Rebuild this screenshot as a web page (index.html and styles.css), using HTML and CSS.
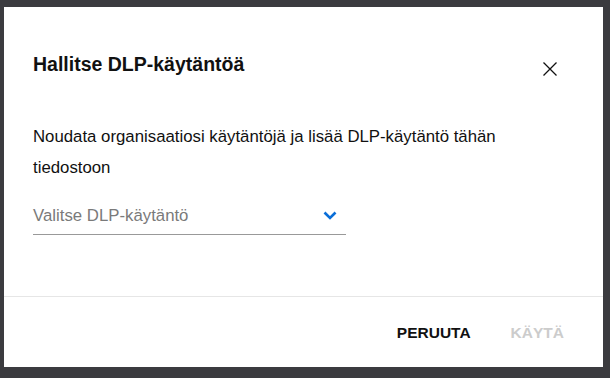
FILE: index.html
```html
<!DOCTYPE html>
<html lang="fi">
<head>
    <meta charset="UTF-8">
    <meta name="viewport" content="width=device-width, initial-scale=1.0">
    <title>Hallitse DLP-käytäntöä</title>
    <link rel="stylesheet" href="styles.css">
</head>
<body>
    <div class="dialog">
        <div class="dialog-body">
            <div class="dialog-header">
                <h2 class="dialog-title">Hallitse DLP-käytäntöä</h2>
                <button class="close" aria-label="Sulje">
                    <svg width="14" height="14" viewBox="0 0 14 14">
                        <path d="M0.5 0.5 L13.5 13.5 M13.5 0.5 L0.5 13.5" stroke="#111" stroke-width="1.3" fill="none"/>
                    </svg>
                </button>
            </div>
            <p class="description">Noudata organisaatiosi käytäntöjä ja lisää DLP-käytäntö tähän tiedostoon</p>
            <div class="select">
                <span class="placeholder">Valitse DLP-käytäntö</span>
                <svg class="chevron" width="14" height="9" viewBox="0 0 14 9">
                    <path d="M1.5 1.5 L7 7 L12.5 1.5" stroke="#0a6ed8" stroke-width="2.6" fill="none"/>
                </svg>
            </div>
        </div>
        <div class="dialog-footer">
            <button class="btn">PERUUTA</button>
            <button class="btn disabled" disabled>KÄYTÄ</button>
        </div>
    </div>
</body>
</html>
```

FILE: styles.css
```css
body {
    margin: 0;
    background-color: #3b3b3f;
    font-family: "Liberation Sans", Arial, sans-serif;
    color: #111;
}
.dialog {
    margin: 7px 7px 11px 4px;
    width: 599px;
    height: 360px;
    background-color: #fff;
    display: flex;
    flex-direction: column;
}
.dialog-body {
    flex: 1;
    padding: 42px 46px 0 29px;
}
.dialog-header {
    display: flex;
    justify-content: space-between;
    align-items: center;
    height: 30px;
}
.dialog-title {
    margin: 0;
    font-size: 19.5px;
    font-weight: bold;
    line-height: 24px;
}
.close {
    border: none;
    background: none;
    padding: 0;
    width: 14px;
    height: 14px;
    margin-top: 10px;
    cursor: pointer;
}
.close svg {
    display: block;
}
.description {
    margin: 41.5px 0 0 0;
    font-size: 16.8px;
    line-height: 31px;
    width: 520px;
}
.select {
    margin-top: 16px;
    width: 313px;
    height: 36px;
    padding-bottom: 1px;
    border-bottom: 1px solid #999;
    display: flex;
    align-items: center;
    justify-content: space-between;
    box-sizing: border-box;
}
.placeholder {
    font-size: 16.8px;
    color: #7a7a7a;
}
.chevron {
    margin-right: 9px;
}
.dialog-footer {
    height: 71px;
    border-top: 1px solid #e6e6e6;
    box-sizing: border-box;
    display: flex;
    justify-content: flex-end;
    align-items: center;
    gap: 40px;
    padding: 2px 39px 0 0;
}
.btn {
    border: none;
    background: none;
    padding: 0;
    font-family: "Liberation Sans", Arial, sans-serif;
    font-size: 15.5px;
    font-weight: bold;
    color: #111;
    cursor: pointer;
}
.btn.disabled {
    color: #cccccc;
    cursor: default;
}
```
